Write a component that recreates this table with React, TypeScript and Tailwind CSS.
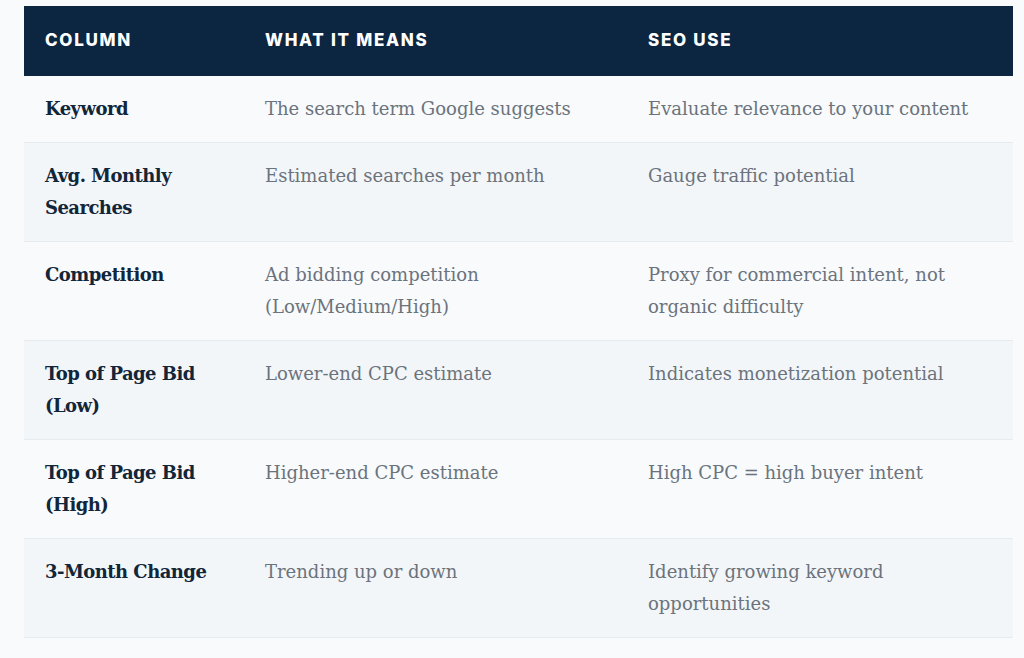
const rows: [string, string, string][] = [
  ["Keyword", "The search term Google suggests", "Evaluate relevance to your content"],
  ["Avg. Monthly Searches", "Estimated searches per month", "Gauge traffic potential"],
  ["Competition", "Ad bidding competition (Low/Medium/High)", "Proxy for commercial intent, not organic difficulty"],
  ["Top of Page Bid (Low)", "Lower-end CPC estimate", "Indicates monetization potential"],
  ["Top of Page Bid (High)", "Higher-end CPC estimate", "High CPC = high buyer intent"],
  ["3-Month Change", "Trending up or down", "Identify growing keyword opportunities"],
];

export default function App() {
  return (
    <div className="min-h-[658px] w-[1024px] bg-[#f8fafc] pt-[6px] pl-[24px]">
      <table className="w-[989px] table-fixed border-collapse">
        <colgroup>
          <col className="w-[220px]" />
          <col className="w-[383px]" />
          <col className="w-[386px]" />
        </colgroup>
        <thead>
          <tr className="h-[70px] bg-[#0c2541] text-left">
            {["Column", "What It Means", "SEO Use"].map((h) => (
              <th
                key={h}
                className="px-[21px] align-middle font-['Inter',sans-serif] text-[17px] font-extrabold uppercase tracking-[0.1em] text-white"
              >
                {h}
              </th>
            ))}
          </tr>
        </thead>
        <tbody className="font-['DejaVu_Serif',serif] text-[18px] leading-[32px]">
          {rows.map((r, i) => (
            <tr
              key={r[0]}
              className={i % 2 === 0 ? "bg-[#f8fafc] border-b border-[#e6ebf0]" : "bg-[#f3f6f9] border-b border-[#e6ebf0]"}
            >
              <td className="px-[21px] py-[17px] align-top font-bold text-[#12263a] tracking-[-0.03em]">{r[0]}</td>
              <td className="px-[21px] py-[17px] align-top text-[#6b737c]">{r[1]}</td>
              <td className="px-[21px] py-[17px] align-top text-[#6b737c]">{r[2]}</td>
            </tr>
          ))}
        </tbody>
      </table>
    </div>
  );
}
